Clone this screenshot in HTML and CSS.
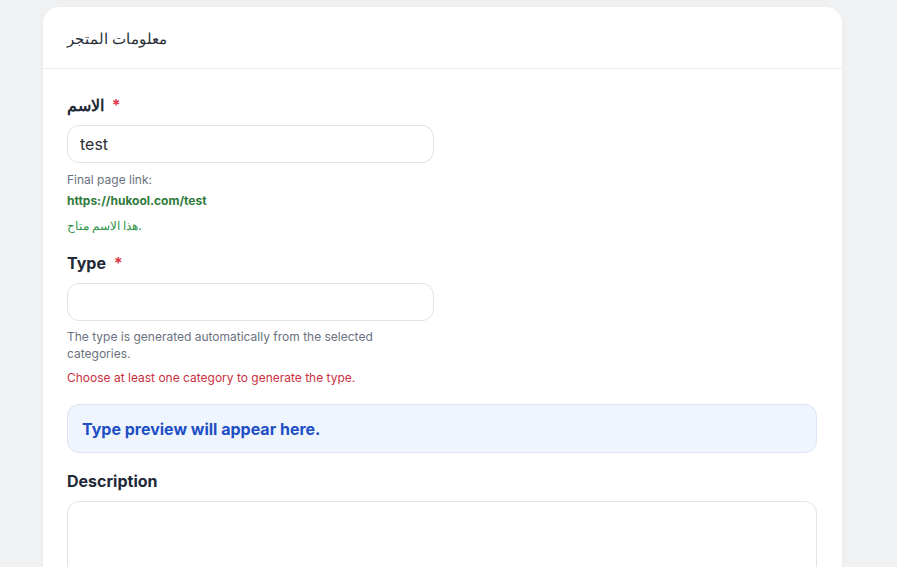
FILE: index.html
```html
<!DOCTYPE html>
<html lang="en">
<head>
<meta charset="utf-8">
<title>Store info</title>
<link rel="stylesheet" href="styles.css">
</head>
<body>
<div class="page">
  <section class="card">
    <header class="card-header">معلومات المتجر</header>
    <div class="card-body">
      <div class="field">
        <label class="label">الاسم <span class="req">*</span></label>
        <div class="input">test</div>
        <div class="hint first">Final page link:</div>
        <div class="hint link">https://hukool.com/test</div>
        <div class="hint ok">هذا الاسم متاح.</div>
      </div>
      <div class="field">
        <label class="label">Type <span class="req">*</span></label>
        <div class="input"></div>
        <div class="hint first narrow">The type is generated automatically from the selected categories.</div>
        <div class="hint err">Choose at least one category to generate the type.</div>
      </div>
      <div class="preview">Type preview will appear here.</div>
      <div class="field spaced">
        <label class="label">Description</label>
        <div class="textarea"></div>
      </div>
    </div>
  </section>
</div>
</body>
</html>
```

FILE: styles.css
```css
* { box-sizing: border-box; }
html, body { margin: 0; padding: 0; }
body {
  background: #f0f1f3;
  font-family: Inter, "Noto Sans", "Liberation Sans", sans-serif;
  color: #1f2937;
  height: 567px;
  overflow: hidden;
}
.page {
  padding: 7px 55px 0 43px;
}
.card {
  background: #fff;
  border-radius: 16px;
  box-shadow: 0 1px 4px rgba(0,0,0,0.04);
  min-height: 600px;
}
.card-header {
  height: 62px;
  padding: 0 24px;
  display: flex;
  align-items: center;
  font-size: 15px;
  font-weight: 500;
  font-family: "Noto Sans", Inter, sans-serif;
  color: #2a2f38;
  border-bottom: 1px solid #eceef1;
}
.card-body {
  padding: 24px 25px 0 24px;
  display: flex;
  flex-direction: column;
}
.field { display: flex; flex-direction: column; }
.field + .field, .field.spaced { margin-top: 16px; }
.label {
  font-size: 16px;
  font-weight: 700;
  line-height: 24px;
  color: #1f2937;
}
.req { color: #dc3545; margin-left: 4px; font-weight: 700; }
.input {
  margin-top: 8px;
  width: 367px;
  height: 38px;
  border: 1px solid #dfe2e6;
  border-radius: 12px;
  padding: 0 12px;
  display: flex;
  align-items: center;
  font-size: 16px;
  color: #2a2f38;
}
.hint {
  font-size: 12px;
  line-height: 18px;
  color: #6b7280;
}
.hint.first { margin-top: 8px; }
.hint.link { margin-top: 3px; color: #2e7a3a; font-weight: 700; }
.hint.ok { margin-top: 7px; color: #2f9447; font-family: "Noto Sans", Inter, sans-serif; }
.hint.narrow { width: 367px; line-height: 17px; margin-top: 7px; }
.hint.err { margin-top: 7px; color: #c8303f; }
.preview {
  margin-top: 17px;
  height: 49px;
  border: 1px solid #dbe5f3;
  background: #eef5ff;
  border-radius: 12px;
  padding: 0 14px;
  display: flex;
  align-items: center;
  font-size: 16px;
  font-weight: 700;
  color: #1e4fc4;
}
.textarea {
  margin-top: 8px;
  height: 100px;
  border: 1px solid #dfe2e6;
  border-radius: 12px;
}
```
